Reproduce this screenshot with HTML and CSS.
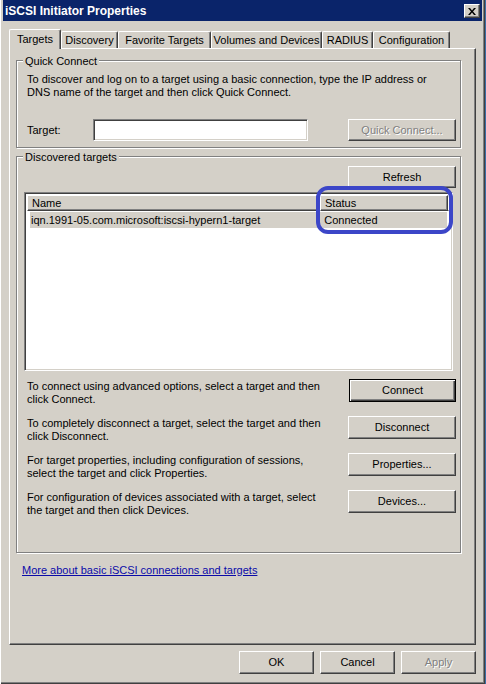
FILE: index.html
```html
<!DOCTYPE html>
<html lang="en">
<head>
  <meta charset="UTF-8">
  <title>iSCSI Initiator Properties</title>
  <link rel="stylesheet" href="styles.css">
</head>
<body>

  <div class="window">
    <div class="titlebar">
      <span class="title">iSCSI Initiator Properties</span>
      <span class="close-button">
        <svg width="8" height="7" viewBox="0 0 8 7"><path d="M0 0h2l2 2.5L6 0h2L5 3.5 8 7H6L4 4.5 2 7H0l3-3.5z" fill="#000"/></svg>
      </span>
    </div>

    <div class="tabs">
      <div class="tab selected tab-targets">Targets</div>
      <div class="tab tab-discovery">Discovery</div>
      <div class="tab tab-favorite">Favorite Targets</div>
      <div class="tab tab-volumes">Volumes and Devices</div>
      <div class="tab tab-radius">RADIUS</div>
      <div class="tab tab-config">Configuration</div>
    </div>

    <div class="panel">
      <div class="group group-quick">
        <div class="group-label">Quick Connect</div>
        <p class="description">To discover and log on to a target using a basic connection, type the IP address or DNS name of the target and then click Quick Connect.</p>
        <div class="target-row">
          <span class="target-label">Target:</span>
          <span class="text-input"></span>
          <button class="button wide disabled">Quick Connect...</button>
        </div>
      </div>

      <div class="group group-discovered">
        <div class="group-label">Discovered targets</div>
        <div class="refresh-row">
          <button class="button wide refresh">Refresh</button>
        </div>
        <div class="list">
          <div class="list-header">
            <span class="col-header col-name">Name</span>
            <span class="col-header col-status">Status</span>
            <span class="col-header col-rest"></span>
          </div>
          <div class="list-row">
            <span class="col-name">iqn.1991-05.com.microsoft:iscsi-hypern1-target</span>
            <span class="col-status">Connected</span>
          </div>
          <div class="highlight"></div>
        </div>

        <div class="action-rows">
          <div class="action-row">
            <p class="action-text">To connect using advanced options, select a target and then click Connect.</p>
            <button class="button wide default">Connect</button>
          </div>
          <div class="action-row">
            <p class="action-text">To completely disconnect a target, select the target and then click Disconnect.</p>
            <button class="button wide">Disconnect</button>
          </div>
          <div class="action-row">
            <p class="action-text">For target properties, including configuration of sessions, select the target and click Properties.</p>
            <button class="button wide">Properties...</button>
          </div>
          <div class="action-row">
            <p class="action-text">For configuration of devices associated with a target, select the target and then click Devices.</p>
            <button class="button wide">Devices...</button>
          </div>
        </div>
      </div>

      <a class="more-link" href="#">More about basic iSCSI connections and targets</a>
    </div>

    <div class="dialog-buttons">
      <button class="button">OK</button>
      <button class="button">Cancel</button>
      <button class="button disabled">Apply</button>
    </div>
  </div>

</body>
</html>
```

FILE: styles.css
```css
* {
  box-sizing: border-box;
  margin: 0;
  padding: 0;
}

body {
  background: #3a6ea5;
  font-family: "Liberation Sans", Arial, sans-serif;
  font-size: 11px;
  line-height: 13px;
  color: #000;
}

.window {
  width: 485px;
  height: 684px;
  padding: 0 3px;
  background: #d4d0c8;
  box-shadow: inset 1px 0 #fff, inset -1px -1px #404040, inset -2px -2px #808080;
}

/* title bar */
.titlebar {
  height: 21px;
  padding: 1px 2px 0 2px;
  display: flex;
  align-items: center;
  justify-content: space-between;
  background: #0a246a;
  color: #fff;
  font-size: 12px;
  font-weight: bold;
}

.close-button {
  width: 16px;
  height: 14px;
  display: flex;
  align-items: center;
  justify-content: center;
  background: #d4d0c8;
  border: 1px solid;
  border-color: #fff #404040 #404040 #fff;
  box-shadow: inset -1px -1px #808080;
}

/* tabs */
.tabs {
  margin: 8px 0 0 6px;
  height: 19px;
  display: flex;
  align-items: flex-end;
  position: relative;
  z-index: 1;
}

.tab {
  height: 17px;
  padding-top: 2px;
  text-align: center;
  background: #d4d0c8;
  border: 1px solid;
  border-bottom: none;
  border-color: #fff #404040 #fff #fff;
  border-radius: 2px 2px 0 0;
  box-shadow: inset -1px 0 #808080;
}

.tab.selected {
  height: 20px;
  margin-bottom: -1px;
  padding-top: 3px;
}

.tab-targets { width: 52px; }
.tab-discovery { width: 57px; }
.tab-favorite { width: 93px; }
.tab-volumes { width: 111px; }
.tab-radius { width: 51px; }
.tab-config { width: 77px; }

/* tab page */
.panel {
  width: 467px;
  height: 597px;
  margin-left: 6px;
  padding: 11px 0 0 6px;
  border: 1px solid;
  border-color: #fff #404040 #404040 #fff;
  box-shadow: inset -1px -1px #808080;
}

.group {
  width: 445px;
  border: 1px solid #808080;
  box-shadow: inset 1px 1px #fff, 1px 1px #fff;
}

.group-label {
  display: table;
  margin: -6px 0 0 6px;
  padding: 0 2px;
  background: #d4d0c8;
}

.group-quick {
  height: 88px;
  padding-left: 10px;
}

.group-quick .group-label {
  margin-left: -4px;
}

.description {
  margin-top: 5px;
  width: 410px;
}

.target-row {
  margin-top: 20px;
  display: flex;
  align-items: center;
}

.target-label {
  width: 66px;
}

.text-input {
  width: 215px;
  height: 22px;
  background: #fff;
  border: 1px solid;
  border-color: #808080 #fff #fff #808080;
  box-shadow: inset 1px 1px #404040, inset -1px -1px #d4d0c8;
}

.target-row .button {
  margin-left: 40px;
}

.group-discovered {
  height: 397px;
  margin-top: 8px;
  padding: 0 4px 0 7px;
}

.group-discovered .group-label {
  margin-left: -1px;
}

.refresh-row {
  margin-top: 2px;
  display: flex;
  justify-content: flex-end;
}

/* list view */
.list {
  position: relative;
  width: 429px;
  height: 179px;
  margin-top: 4px;
  background: #fff;
  border: 1px solid;
  border-color: #808080 #fff #fff #808080;
  box-shadow: inset 1px 1px #404040, inset -1px -1px #d4d0c8;
  padding: 2px 2px 0 2px;
}

.list-header {
  display: flex;
  height: 16px;
}

.col-header {
  height: 16px;
  padding: 1px 0 0 4px;
  background: #d4d0c8;
  border: 1px solid;
  border-color: #fff #404040 #404040 #fff;
  box-shadow: inset -1px -1px #808080;
}

.col-name {
  width: 293px;
}

.col-status {
  width: 128px;
}

.col-rest {
  flex: 1;
  padding: 0;
}

.list-row {
  display: flex;
  height: 16px;
  margin: 1px 0 0 3px;
  width: 417px;
  padding-top: 2px;
  background: #d4d0c8;
}

.list-row .col-name {
  width: 290px;
  padding-left: 1px;
}

.list-row .col-status {
  padding-left: 5px;
}

.highlight {
  position: absolute;
  left: 291px;
  top: -7px;
  width: 137px;
  height: 48px;
  border: 4px solid #3c46c8;
  border-radius: 12px;
}

.action-rows {
  margin-top: 8px;
  display: flex;
  flex-direction: column;
  gap: 10px;
}

.action-row {
  display: flex;
  justify-content: space-between;
  align-items: flex-start;
}

.action-text {
  width: 300px;
  margin-left: 3px;
  padding-top: 1px;
}

/* buttons */
.button {
  width: 75px;
  height: 23px;
  font: inherit;
  color: #000;
  background: #d4d0c8;
  border: 1px solid;
  border-color: #fff #404040 #404040 #fff;
  box-shadow: inset -1px -1px #808080;
}

.button.wide {
  width: 108px;
}

.button.refresh,
.target-row .button {
  height: 22px;
}

.button.default {
  width: 107px;
  border-color: #000;
  box-shadow: inset 1px 1px #fff, inset -1px -1px #404040, inset -2px -2px #808080;
}

.button.disabled {
  color: #808080;
  text-shadow: 1px 1px #fff;
}

.more-link {
  display: inline-block;
  margin: 11px 0 0 6px;
  color: #0a0aa8;
}

.dialog-buttons {
  margin: 6px 6px 0 0;
  display: flex;
  justify-content: flex-end;
  gap: 6px;
}
```
